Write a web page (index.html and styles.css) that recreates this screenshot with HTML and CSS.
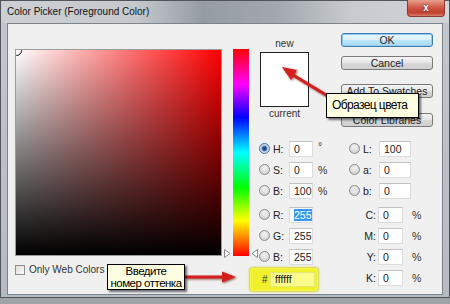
FILE: index.html
```html
<!DOCTYPE html>
<html lang="en">
<head>
  <meta charset="UTF-8" />
  <title>Color Picker</title>
  <link rel="stylesheet" href="styles.css">
</head>
<body>
  <div class="window">
    <div class="titlebar">
      <span class="title">Color Picker (Foreground Color)</span>
      <span class="close">x</span>
    </div>

    <div class="client">
      <div class="picker">
        <div class="field"><span class="marker"></span></div>
        <div class="webcolors"><span class="checkbox"></span>Only Web Colors</div>
      </div>

      <div class="hue">
        <svg class="tri tri-left" width="7" height="9" viewBox="0 0 7 9"><polygon points="0.5,0.5 6,4.5 0.5,8.5" /></svg>
        <svg class="tri tri-right" width="7" height="9" viewBox="0 0 7 9"><polygon points="6.5,0.5 1,4.5 6.5,8.5" /></svg>
      </div>

      <div class="controls">
        <div class="top">
          <div class="swatch-col">
            <div class="caption">new</div>
            <div class="swatch"></div>
            <div class="caption">current</div>
          </div>
          <div class="buttons">
            <div class="btn default">OK</div>
            <div class="btn">Cancel</div>
            <div class="btn wide">Add To Swatches</div>
            <div class="btn wide">Color Libraries</div>
          </div>
        </div>

        <div class="fields">
          <div class="cell"><span class="radio on"></span><span class="lbl">H:</span><span class="input">0</span><span class="unit deg">°</span></div>
          <div class="cell"><span class="radio"></span><span class="lbl">L:</span><span class="input long">100</span></div>
          <div class="cell"><span class="radio"></span><span class="lbl">S:</span><span class="input">0</span><span class="unit">%</span></div>
          <div class="cell"><span class="radio"></span><span class="lbl">a:</span><span class="input long">0</span></div>
          <div class="cell"><span class="radio"></span><span class="lbl">B:</span><span class="input">100</span><span class="unit">%</span></div>
          <div class="cell"><span class="radio"></span><span class="lbl">b:</span><span class="input long">0</span></div>
        </div>

        <div class="fields lower">
          <div class="cell"><span class="radio"></span><span class="lbl">R:</span><span class="input"><span class="sel">255</span></span></div>
          <div class="cell"><span class="lbl cmyk">C:</span><span class="input">0</span><span class="unit wide-gap">%</span></div>
          <div class="cell"><span class="radio"></span><span class="lbl">G:</span><span class="input">255</span></div>
          <div class="cell"><span class="lbl cmyk">M:</span><span class="input">0</span><span class="unit wide-gap">%</span></div>
          <div class="cell"><span class="radio"></span><span class="lbl">B:</span><span class="input">255</span></div>
          <div class="cell"><span class="lbl cmyk">Y:</span><span class="input">0</span><span class="unit wide-gap">%</span></div>
          <div class="cell"><div class="hex"><span class="hash">#</span><span class="input hex-input">ffffff</span></div></div>
          <div class="cell"><span class="lbl cmyk">K:</span><span class="input">0</span><span class="unit wide-gap">%</span></div>
        </div>
      </div>
    </div>

    <!-- annotations drawn over the dialog -->
    <svg class="arrows" width="450" height="304" viewBox="0 0 450 304">
      <g class="arrow">
        <line x1="331" y1="98" x2="293" y2="75" />
        <polygon points="282,67 297,70 291,80" />
        <line x1="185" y1="277" x2="224" y2="277" />
        <polygon points="236,277 222,271.5 222,282.5" />
      </g>
    </svg>
    <div class="note note-swatch">Образец цвета</div>
    <div class="note note-hex">Введите<br>номер оттенка</div>
  </div>
</body>
</html>
```

FILE: styles.css
```css
body {
  margin: 0;
  font-family: "Liberation Sans", Arial, sans-serif;
  font-size: 10px;
  color: #1e1e1e;
  background: #9ea3a8;
}

.window {
  width: 450px;
  height: 298px;
  box-sizing: border-box;
  border: 1px solid #50565c;
  padding: 0 6px 2px;
  background: linear-gradient(to bottom, #c2c7cd, #b5bbc2);
  display: flex;
  flex-direction: column;
  position: relative;
}

.titlebar {
  height: 22px;
  margin: 0 -6px;
  padding: 0 4px 0 6px;
  display: flex;
  justify-content: space-between;
  background: linear-gradient(to right, #ccd0d5 0%, #c5c9ce 30%, #959ca3 45%, #a2a8ae 62%, #c7cbcf 78%, #d1d5d9 100%);
}

.title {
  font-size: 10px;
  line-height: 22px;
  color: #111;
}

.close {
  width: 38px;
  height: 17px;
  margin-top: -1px;
  border: 1px solid #8a3a30;
  border-top: 0;
  border-radius: 0 0 4px 4px;
  box-sizing: border-box;
  background: linear-gradient(to bottom, #e8a090, #cf5440 50%, #c04030 80%, #d8806c);
  color: #fff;
  font-weight: bold;
  font-size: 10px;
  line-height: 15px;
  text-align: center;
  text-shadow: 0 0 2px #600;
}

.client {
  flex: 1;
  background: #f0f0f0;
  border: 1px solid #7d838a;
  display: flex;
  padding: 9px 9px 0 7px;
}

.picker {
  width: 207px;
  margin-top: 16px;
}

.field {
  height: 207px;
  box-sizing: border-box;
  border: 1px solid #9a9a9a;
  background:
    linear-gradient(to top, #000, rgba(0, 0, 0, 0)),
    linear-gradient(to right, #fff, #f00);
  position: relative;
  overflow: hidden;
}

.marker {
  position: absolute;
  top: -5px;
  left: -5px;
  width: 9px;
  height: 9px;
  border: 1px solid #111;
  border-radius: 50%;
}

.webcolors {
  margin-top: 9px;
  display: flex;
  align-items: center;
  gap: 4px;
  color: #333;
  line-height: 10px;
}

.checkbox {
  width: 10px;
  height: 10px;
  box-sizing: border-box;
  border: 1px solid #8f8f8f;
  background: linear-gradient(135deg, #dcdcdc, #fafafa);
}

.hue {
  width: 16px;
  height: 207px;
  margin: 16px 0 0 11px;
  background: linear-gradient(to bottom, #f00 0%, #f0f 17%, #00f 33%, #0ff 50%, #0f0 67%, #ff0 83%, #f00 100%);
  position: relative;
}

.tri {
  position: absolute;
  top: 200px;
}

.tri polygon {
  fill: #fff;
  stroke: #8a8a8a;
}

.tri-left {
  left: -9px;
}

.tri-right {
  right: -9px;
}

.controls {
  margin-left: 11px;
  flex: 1;
}

.top {
  display: flex;
}

.swatch-col {
  width: 49px;
  padding-top: 5px;
}

.caption {
  text-align: center;
  line-height: 12px;
  color: #333;
}

.swatch {
  height: 55px;
  margin: 2px 0 1px;
  box-sizing: border-box;
  border: 1px solid #222;
  background: #fff;
}

.buttons {
  width: 92px;
  margin-left: 32px;
  display: flex;
  flex-direction: column;
}

.btn {
  height: 14px;
  box-sizing: border-box;
  border: 1px solid #7a7a7a;
  border-radius: 3px;
  background: linear-gradient(to bottom, #f4f4f4, #e6e6e6 50%, #d8d8d8 51%, #cfcfcf);
  text-align: center;
  line-height: 12px;
  font-size: 10.5px;
  color: #222;
  white-space: nowrap;
  overflow: hidden;
}

.btn + .btn {
  margin-top: 9px;
}

.btn.wide {
  margin-top: 14px;
}

.btn.wide + .btn.wide {
  margin-top: 15px;
}

.btn.default {
  border-color: #3d7bad;
  background: linear-gradient(to bottom, #eaf6fd, #d9f0fc 50%, #bee6fd 51%, #a7d9f5);
  box-shadow: inset 0 0 0 1px #8ed0f5;
}

.fields {
  margin-top: 11px;
  display: grid;
  grid-template-columns: 90px 1fr;
  grid-auto-rows: 21px;
}

.fields.lower {
  margin-top: 3px;
}

.cell {
  display: flex;
  align-items: center;
}

.radio {
  width: 11px;
  height: 11px;
  margin-left: -1px;
  box-sizing: border-box;
  border: 1px solid #8c8c8c;
  border-radius: 50%;
  background: radial-gradient(circle at 50% 35%, #f4f4f4, #c9c9c9);
}

.radio.on {
  border-color: #4a6f98;
  background: radial-gradient(circle, #1c3f72 0, #2c5a92 2px, #a9c4e2 3px, #e4edf7 5px);
}

.lbl {
  width: 15px;
  margin-left: 3px;
  color: #222;
  font-size: 10.5px;
}

.lbl.cmyk {
  width: 26px;
  margin-left: 0;
  text-align: right;
}

.input {
  width: 24px;
  height: 16px;
  margin-left: 1px;
  box-sizing: border-box;
  padding-left: 4px;
  border: 1px solid #dcdcdc;
  border-top-color: #c2c2c2;
  background: #fff;
  line-height: 14px;
  font-size: 10.5px;
  color: #222;
}

.input.long {
  width: 32px;
}

.lbl.cmyk + .input {
  width: 25px;
  margin-left: 2px;
}

.sel {
  background: #3399ff;
  color: #fff;
}

.unit {
  margin-left: 5px;
  color: #333;
  font-size: 10.5px;
}

.unit.deg {
  align-self: flex-start;
  margin-top: 2px;
}

.unit.wide-gap {
  margin-left: 9px;
}

.hex {
  align-self: flex-start;
  margin: 1px 0 0 -10px;
  width: 68px;
  height: 23px;
  box-sizing: border-box;
  padding: 4px 0 0 12px;
  display: flex;
  background: #f0f02c;
  border-radius: 3px;
  box-shadow: 0 0 2px 1px #d4d43a, inset 0 0 3px #fbfb70;
}

.hash {
  width: 8px;
  line-height: 15px;
  color: #333;
}

.input.hex-input {
  width: 45px;
  height: 15px;
  margin-left: 0;
  border-color: #e8e870;
  background: #fbfb8c;
  line-height: 13px;
}

.arrows {
  position: absolute;
  top: -1px;
  left: -1px;
}

.arrow line {
  stroke: #d51f1a;
  stroke-width: 3;
}

.arrow polygon {
  fill: #d51f1a;
}

.arrow {
  filter: drop-shadow(1px 1px 1px rgba(90, 0, 0, 0.6));
}

.note {
  position: absolute;
  box-sizing: border-box;
  border: 1px solid #000;
  background: #fefee2;
  color: #000;
  font-size: 12px;
  letter-spacing: -0.6px;
  box-shadow: 2px 2px 2px rgba(0, 0, 0, 0.55);
}

.note-swatch {
  left: 325px;
  top: 92px;
  width: 93px;
  height: 25px;
  padding-left: 5px;
  line-height: 23px;
}

.note-hex {
  left: 106px;
  top: 263px;
  width: 78px;
  height: 26px;
  line-height: 12px;
  font-size: 11.5px;
  text-align: center;
  letter-spacing: -0.5px;
}
```
